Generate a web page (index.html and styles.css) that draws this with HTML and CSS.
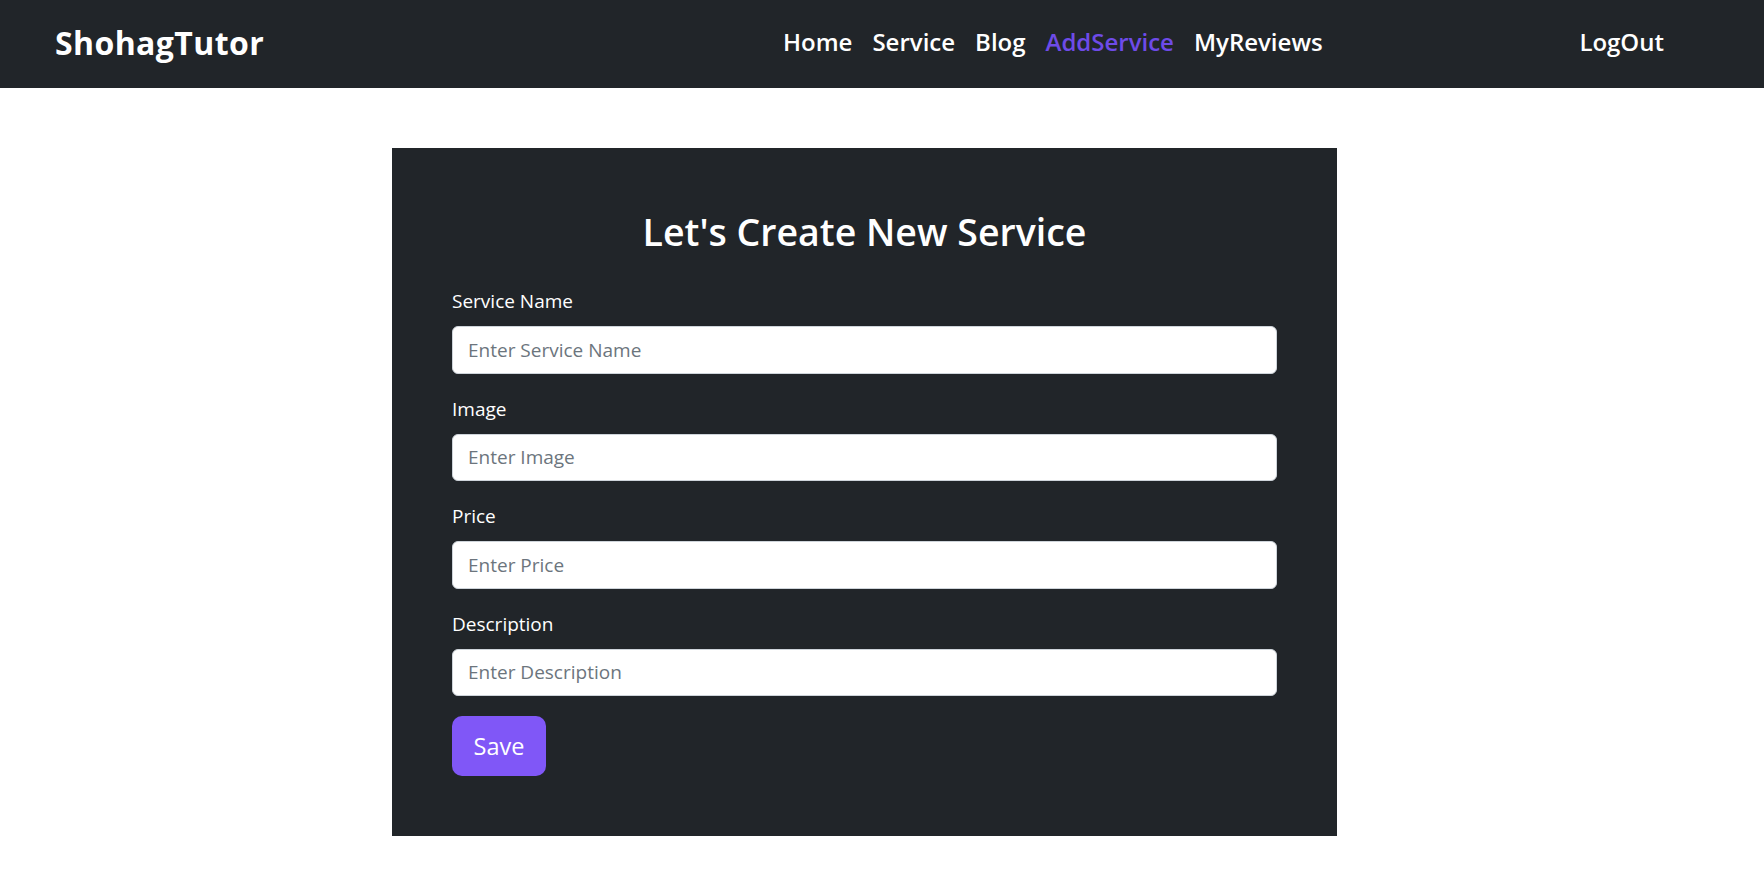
FILE: index.html
```html
<!DOCTYPE html>
<html lang="en">
<head>
<meta charset="utf-8">
<title>ShohagTutor - Add Service</title>
<link rel="stylesheet" href="styles.css">
</head>
<body>
<nav class="navbar">
  <a class="brand" href="#">ShohagTutor</a>
  <ul class="nav-links">
    <li><a class="nav-link" href="#">Home</a></li>
    <li><a class="nav-link" href="#">Service</a></li>
    <li><a class="nav-link" href="#">Blog</a></li>
    <li><a class="nav-link active" href="#">AddService</a></li>
    <li><a class="nav-link" href="#">MyReviews</a></li>
  </ul>
  <span class="spacer"></span>
  <a class="nav-link" href="#">LogOut</a>
</nav>

<main class="main">
  <section class="card">
    <h2 class="title">Let's Create New Service</h2>
    <form class="form">
      <div class="group">
        <label class="label" for="name">Service Name</label>
        <input class="input" id="name" type="text" placeholder="Enter Service Name">
      </div>
      <div class="group">
        <label class="label" for="image">Image</label>
        <input class="input" id="image" type="text" placeholder="Enter Image">
      </div>
      <div class="group">
        <label class="label" for="price">Price</label>
        <input class="input" id="price" type="text" placeholder="Enter Price">
      </div>
      <div class="group">
        <label class="label" for="desc">Description</label>
        <input class="input" id="desc" type="text" placeholder="Enter Description">
      </div>
      <button class="btn" type="submit">Save</button>
    </form>
  </section>
</main>
</body>
</html>
```

FILE: styles.css
```css
* {
  box-sizing: border-box;
}

body {
  margin: 0;
  background: #ffffff;
  font-family: "Open Sans", "Noto Sans", "Liberation Sans", sans-serif;
  color: #212529;
}

.navbar {
  height: 88px;
  background: #212529;
  display: grid;
  grid-template-columns: 718px auto 1fr auto;
  align-items: center;
  padding: 0 90px 4px 55px;
}

.brand {
  color: #ffffff;
  text-decoration: none;
  font-size: 32px;
  font-weight: 700;
  letter-spacing: 0.4px;
}

.nav-links {
  list-style: none;
  margin: 0;
  padding: 0;
  display: flex;
}

.nav-link {
  display: block;
  padding: 0 10px;
  color: #ffffff;
  text-decoration: none;
  font-size: 24px;
  font-weight: 600;
  line-height: 36px;
  letter-spacing: 0;
}

.nav-link.active {
  color: #6e4be8;
}

.main {
  padding-top: 60px;
}

.card {
  width: 945px;
  margin-left: 392px;
  background: #212529;
  padding: 60px;
}

.title {
  margin: 0 0 30px;
  color: #ffffff;
  text-align: center;
  font-size: 37.5px;
  font-weight: 600;
  line-height: 48px;
}

.group {
  margin-bottom: 20px;
}

.label {
  display: block;
  color: #ffffff;
  font-size: 19px;
  line-height: 30px;
  margin-bottom: 10px;
}

.input {
  display: block;
  width: 100%;
  height: 47.5px;
  border: 1px solid #ced4da;
  border-radius: 6px;
  padding: 0 15px;
  font-family: inherit;
  font-size: 19px;
  color: #212529;
  background: #ffffff;
}

.input::placeholder {
  color: #6c757d;
}

.btn {
  display: block;
  width: 94px;
  height: 60px;
  border: none;
  border-radius: 10px;
  background: #8057f7;
  color: #ffffff;
  font-family: inherit;
  font-size: 23.5px;
  padding: 0;
}
```
